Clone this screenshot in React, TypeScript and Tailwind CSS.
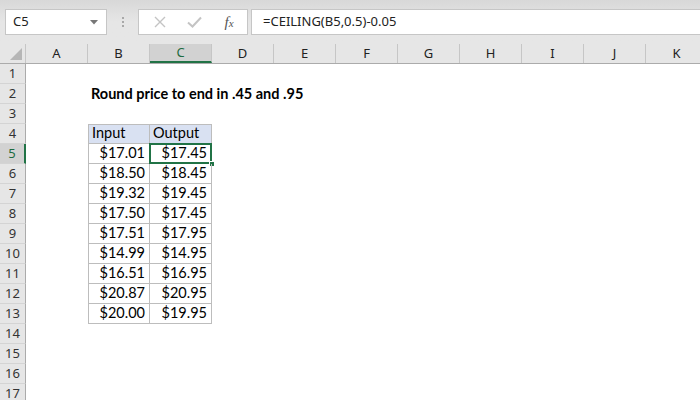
import React from "react";

const COLS = ["A", "B", "C", "D", "E", "F", "G", "H", "I", "J", "K"];
const ROWS = Array.from({ length: 17 }, (_, i) => i + 1);

const DATA: [string, string][] = [
  ["$17.01", "$17.45"],
  ["$18.50", "$18.45"],
  ["$19.32", "$19.45"],
  ["$17.50", "$17.45"],
  ["$17.51", "$17.95"],
  ["$14.99", "$14.95"],
  ["$16.51", "$16.95"],
  ["$20.87", "$20.95"],
  ["$20.00", "$19.95"],
];

const uiFont = { fontFamily: '"Noto Sans", "Open Sans", sans-serif' };
const cellFont = { fontFamily: 'Lato, "Liberation Sans", sans-serif' };

function FormulaBar() {
  return (
    <div className="h-[44px] bg-gradient-to-b from-[#d8d8d8] via-[#e6e6e6] to-[#e6e6e6] pt-[9px] flex items-start">
      {/* name box */}
      <div className="ml-[5px] w-[102px] h-[26px] bg-white border border-[#c6c6c6] flex items-center justify-between pl-[7px] pr-[8px]">
        <span className="text-[13px] text-[#222]" style={uiFont}>
          C5
        </span>
        <svg width="8" height="5" viewBox="0 0 8 5">
          <path d="M0 0 L8 0 L4 4.5 Z" fill="#777" />
        </svg>
      </div>
      {/* splitter dots */}
      <div className="w-[31px] h-[26px] flex flex-col items-center justify-center gap-[2px]">
        <span className="w-[2px] h-[2px] bg-[#a8a8a8]" />
        <span className="w-[2px] h-[2px] bg-[#a8a8a8]" />
        <span className="w-[2px] h-[2px] bg-[#a8a8a8]" />
      </div>
      {/* cancel / enter / fx */}
      <div className="w-[110px] h-[26px] bg-white border border-[#c6c6c6] flex items-center">
        <div className="w-[38px] flex justify-center pl-[3px]">
          <svg width="12" height="12" viewBox="0 0 12 12">
            <path d="M1 1 L11 11 M11 1 L1 11" stroke="#c4c4c4" strokeWidth="1.4" />
          </svg>
        </div>
        <div className="w-[34px] flex justify-center">
          <svg width="15" height="12" viewBox="0 0 15 12">
            <path d="M1 6.5 L5.5 10.5 L14 1.5" stroke="#c4c4c4" strokeWidth="2" fill="none" />
          </svg>
        </div>
        <div className="w-[36px] flex justify-center">
          <span
            className="italic text-[15px] text-[#555] leading-none"
            style={{ fontFamily: '"Liberation Serif", "DejaVu Serif", serif' }}
          >
            f<span className="text-[11px]">x</span>
          </span>
        </div>
      </div>
      {/* formula input */}
      <div className="ml-[3px] flex-1 h-[26px] bg-white border border-[#c6c6c6] border-r-0 flex items-center pl-[11px]">
        <span className="text-[13px] text-[#222]" style={uiFont}>
          =CEILING(B5,0.5)-0.05
        </span>
      </div>
    </div>
  );
}

function ColumnHeaders() {
  return (
    <div className="flex h-[20px] bg-[#e6e6e6] border-b border-[#ababab]">
      <div className="w-[26px] shrink-0 border-r border-[#c6c6c6] relative">
        <svg className="absolute right-[3px] bottom-[3px]" width="12" height="12" viewBox="0 0 12 12">
          <path d="M12 0 L12 12 L0 12 Z" fill="#b6b6b6" />
        </svg>
      </div>
      {COLS.map((c) => (
        <div
          key={c}
          className={`w-[62px] shrink-0 flex items-center justify-center text-[13px] border-r border-[#c6c6c6] ${
            c === "C" ? "bg-[#d2d2d2] text-[#1e6b3f] border-b-2 border-b-[#217346]" : "text-[#222]"
          }`}
          style={uiFont}
        >
          {c}
        </div>
      ))}
    </div>
  );
}

function Cell({
  children,
  align = "left",
  bold = false,
  boxed = false,
  header = false,
  top = false,
  left = false,
}: {
  children?: React.ReactNode;
  align?: "left" | "right";
  bold?: boolean;
  boxed?: boolean;
  header?: boolean;
  top?: boolean;
  left?: boolean;
}) {
  return (
    <div
      className={`w-[62px] shrink-0 h-[20px] flex items-end pb-[1px] text-[14.5px] leading-[18px] whitespace-nowrap text-black ${
        align === "right" ? "justify-end pr-[4px]" : "justify-start pl-[3px]"
      } ${bold ? "font-bold" : ""} ${boxed ? "border-r border-b border-[#bdbdbd]" : ""} ${
        top ? "border-t" : ""
      } ${left ? "border-l" : ""} ${header ? "bg-[#d9e1f2]" : ""}`}
      style={cellFont}
    >
      {children}
    </div>
  );
}

function Row({ n }: { n: number }) {
  const selected = n === 5;
  const dataIdx = n - 5;
  let b: React.ReactNode = null;
  let c: React.ReactNode = null;
  if (n === 2) {
    b = (
      <Cell bold>
        <span className="overflow-visible">Round price to end in .45 and .95</span>
      </Cell>
    );
  } else if (n === 4) {
    b = (
      <Cell boxed header top left>
        Input
      </Cell>
    );
    c = (
      <Cell boxed header top>
        Output
      </Cell>
    );
  } else if (dataIdx >= 0 && dataIdx < DATA.length) {
    b = (
      <Cell boxed left align="right">
        {DATA[dataIdx][0]}
      </Cell>
    );
    c = (
      <div className="relative">
        <Cell boxed align="right">
          {DATA[dataIdx][1]}
        </Cell>
        {selected && (
          <>
            <div className="absolute left-[-1px] top-[-1px] w-[63px] h-[21px] border-2 border-[#217346]" />
            <div className="absolute right-[-3px] bottom-[-3px] w-[6px] h-[6px] bg-[#217346] border border-white" />
          </>
        )}
      </div>
    );
  }
  return (
    <div className="flex h-[20px]">
      <div
        className={`w-[26px] shrink-0 flex items-center justify-center text-[13px] border-b border-[#d4d4d4] ${
          selected
            ? "bg-[#d2d2d2] text-[#1e6b3f] border-r-2 border-r-[#217346]"
            : "bg-[#e6e6e6] text-[#333] border-r border-r-[#ababab]"
        }`}
        style={uiFont}
      >
        {n}
      </div>
      <Cell />
      {b ?? <Cell />}
      {c ?? <Cell />}
      {COLS.slice(3).map((k) => (
        <Cell key={k} />
      ))}
    </div>
  );
}

export default function App() {
  return (
    <div className="w-[700px] h-[400px] overflow-hidden bg-white">
      <FormulaBar />
      <ColumnHeaders />
      <div className="flex flex-col">
        {ROWS.map((n) => (
          <Row key={n} n={n} />
        ))}
      </div>
    </div>
  );
}
